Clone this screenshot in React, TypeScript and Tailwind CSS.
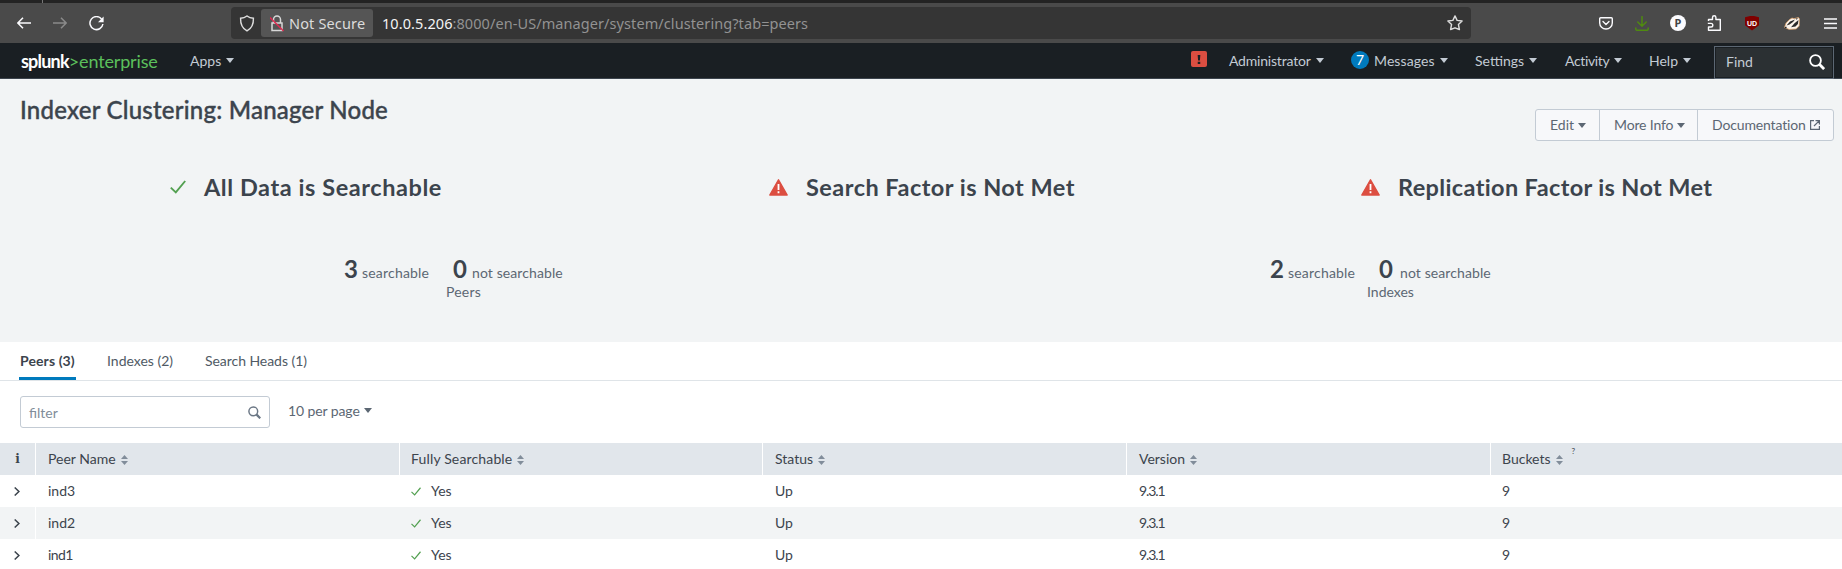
import React from "react";

const Caret = ({ className = "" }: { className?: string }) => (
  <svg viewBox="0 0 8 5" className={"h-[5px] w-2 shrink-0 fill-current " + className}><path d="M0 0h8L4 5z" /></svg>
);

const Sort = () => (
  <svg viewBox="0 0 7 10" className="ml-[5px] mt-px h-[10px] w-[7px] fill-[#818d9a]"><path d="M0 4h7L3.5 0zM0 6h7L3.5 10z" /></svg>
);

const Check = ({ className }: { className: string }) => (
  <svg viewBox="0 0 16 14" className={className} fill="none" stroke="#53a051" strokeWidth="1.9"><path d="M.8 7.6 5.8 12.4 15.2 1" /></svg>
);

const Alert = () => (
  <svg viewBox="0 0 19 17" className="h-[17px] w-[19px] shrink-0">
    <path d="M9.5.8 18.2 16H.8z" fill="#dc4e41" stroke="#dc4e41" strokeWidth="1.4" strokeLinejoin="round" />
    <path d="M8.6 5h1.8v6H8.6zM8.6 12.3h1.8v1.9H8.6z" fill="#fff" />
  </svg>
);

const Magnifier = ({ className }: { className: string }) => (
  <svg viewBox="0 0 16 16" className={className} fill="none" stroke="currentColor"><circle cx="6.5" cy="6.5" r="5.4" strokeWidth="1.8" /><path d="m10.6 10.6 4.5 4.5" strokeWidth="2.8" /></svg>
);

function BrowserBar() {
  return (
    <>
      <div className="flex h-[3px] bg-[#232323]"><div className="ml-[42px] w-px bg-[#777]" /></div>
      <div className="flex h-10 items-center bg-[#4a4a4a] font-['Noto_Sans',sans-serif]">
        <svg viewBox="0 0 14 12" className="ml-[17px] h-3 w-[14px]" fill="none" stroke="#fbfbfe" strokeWidth="1.5"><path d="M14 6H1M6 .7.9 6 6 11.3" /></svg>
        <svg viewBox="0 0 14 12" className="ml-[22px] h-3 w-[14px]" fill="none" stroke="#8a8a8a" strokeWidth="1.5"><path d="M0 6h13M8 .7 13.1 6 8 11.3" /></svg>
        <svg viewBox="0 0 15 15" className="ml-[22px] h-[15px] w-[15px]" fill="none" stroke="#fbfbfe" strokeWidth="1.5"><path d="M12.6 3.1A6.5 6.5 0 1 0 13.9 8" /><path d="M14.600.5v5.700H9z" fill="#fbfbfe" stroke="none" /></svg>
        <div className="ml-[127px] flex h-8 w-[1240px] items-center rounded bg-[#353535]">
          <svg viewBox="0 0 16 18" className="ml-2 h-[17px] w-4" fill="none" stroke="#dedede" strokeWidth="1.5"><path d="M8 1c2 1.500 4 2.200 6.800 2.400C15 9 13.200 14 8 16.900 2.800 14 1 9 1.200 3.400 4 3.200 6 2.500 8 1z" /></svg>
          <div className="ml-[6px] flex h-7 w-28 items-center rounded-[3px] bg-[#555]">
            <svg viewBox="0 0 14 17" className="ml-[9px] h-[17px] w-[14px]" fill="none" stroke="#d8d8d8" strokeWidth="1.5"><path d="M3.500 8V4.500a3.500 3.500 0 0 1 7 0V8M2 8h10v7.500H2z" /><path d="m0 2.500 13.500 13.500" stroke="#e22850" /></svg>
            <span className="ml-[5px] whitespace-nowrap text-[14.5px] leading-5 tracking-[0.15px] text-[#dcdcdc]">Not Secure</span>
          </div>
          <span className="ml-[9px] whitespace-nowrap text-[14.5px] leading-5 tracking-[0.08px] text-[#929292]"><span className="text-[#f4f4f4]">10.0.5.206</span>:8000/en-US/manager/system/clustering?tab=peers</span>
          <svg viewBox="0 0 16 16" className="ml-auto mr-2 h-4 w-4" fill="none" stroke="#dedede" strokeWidth="1.4" strokeLinejoin="round"><path d="m8 .9 2.100 4.500 5 .6-3.700 3.400 1 5.100L8 12.800l-4.400 1.700 1-5.100L.9 6l5-.6z" /></svg>
        </div>
        <div className="ml-[128px] flex items-center">
          <svg viewBox="0 0 14 13" className="h-[13px] w-[14px]" fill="none" stroke="#fbfbfe" strokeWidth="1.4" strokeLinecap="round" strokeLinejoin="round"><path d="M1.700.8h10.600q1 0 1 1V6a6.300 6 0 0 1-12.600 0V1.800q0-1 1-1z" /><path d="m4 4.500 3 3 3-3" /></svg>
          <svg viewBox="0 0 14 15" className="ml-[22px] h-[15px] w-[14px]" fill="none" stroke="#4f8a10" strokeWidth="1.500" strokeLinecap="round"><path d="M7 .6V10M2.800 6 7 10.200 11.200 6M.8 12v1q0 1.300 1.300 1.300h9.800q1.300 0 1.300-1.300v-1" /></svg>
          <div className="ml-[21px] flex h-4 w-4 items-center justify-center rounded-full bg-[#fbfbfe] font-['Noto_Sans',sans-serif] text-[11px] font-bold leading-4 text-[#444]">P</div>
          <svg viewBox="0 0 14 16" className="ml-[21px] h-4 w-[14px]" fill="none" stroke="#fbfbfe" strokeWidth="1.400" strokeLinejoin="round"><path d="M1.500 6V4.500h4V2.500a1.700 1.700 0 0 1 3.400 0v2h4.400v10.700H1.500V12H4a1.700 1.700 0 0 0 0-3.600H.8" /></svg>
          <div className="ml-[24px] flex h-[15px] w-[14px] items-center justify-center bg-[#800000] font-['Liberation_Sans',sans-serif] text-[7px] font-bold leading-none text-white [clip-path:polygon(0_12%,50%_0,100%_12%,100%_65%,50%_100%,0_65%)]">UD</div>
          <svg viewBox="0 0 16 13" className="ml-[25px] h-[13px] w-4">
            <path d="M.4 10.500 2 6l3.500-3.500L8 1l2 .6L14.500.5l1 1.500-.3 7-3 3-7 .4z" fill="#fbf3ea" stroke="#d99b62" strokeWidth=".7" />
            <path d="M2.500 8.500 6 4.500l5-2-2 2.500-3.500 2.500zM7 10.200l3.500-4L14.500 3l-.6 4-2.400 2.500zM.8 9.800h1.800v1.400H.8zM11.500 1.500l2.500-.3-1.500 1.500z" fill="#292929" />
          </svg>
          <svg viewBox="0 0 13 11" className="ml-[24px] h-[11px] w-[13px]" stroke="#fbfbfe" strokeWidth="1.400"><path d="M0 1h13M0 5.500h13M0 10h13" /></svg>
        </div>
      </div>
    </>
  );
}

function MenuItem({ label, className, text }: { label: string; className: string; text: string }) {
  return <div className={"flex items-center whitespace-nowrap " + className}><span className={text}>{label}</span><Caret className="ml-[5px]" /></div>;
}

function SplunkBar() {
  return (
    <div className="flex h-9 items-center border-b border-[#3c444d] bg-[#1a1f23] text-[14px] leading-5 text-[#c3cbd4]">
      <div className="ml-[21px] flex w-[169px] items-center whitespace-nowrap text-[18px]">
        <span className="font-bold tracking-[-0.8px] text-white">splunk</span><span className="tracking-[-0.15px] text-[#5cc05c]">&gt;enterprise</span>
      </div>
      <MenuItem label="Apps" className="w-[1001px]" text="" />
      <div className="-mt-[3px] flex h-4 w-4 items-center justify-center rounded-[2px] bg-[#dc4e41]">
        <svg viewBox="0 0 4 10" className="h-[9px] w-1 fill-[#1a1f23]"><path d="M.5 0h3L3 6H1zM.6 7.500h2.800V10H.6z" /></svg>
      </div>
      <MenuItem label="Administrator" className="ml-[22px] w-[122px]" text="tracking-[-0.2px]" />
      <div className="-mt-0.5 flex h-[18px] w-[18px] items-center justify-center rounded-full bg-[#007abd] text-white">7</div>
      <MenuItem label="Messages" className="ml-[5px] w-[101px]" text="tracking-[0.1px]" />
      <MenuItem label="Settings" className="w-[90px]" text="" />
      <MenuItem label="Activity" className="w-[84px]" text="tracking-[-0.35px]" />
      <MenuItem label="Help" className="w-[65px]" text="" />
      <div className="mt-[3px] flex h-[33px] w-[120px] items-center border border-[#5c6773] bg-[#2b3033] pl-[11px] pr-2 outline-1 -outline-offset-2 outline-[#1a1f23]">
        <span>Find</span><Magnifier className="ml-auto h-4 w-4 text-white" />
      </div>
    </div>
  );
}

function Status({ label, icon, className, text }: { label: string; icon: React.ReactNode; className: string; text: string }) {
  return <div className={"flex items-center whitespace-nowrap " + className}>{icon}<h2 className={"text-[23.5px] font-bold leading-7 " + text}>{label}</h2></div>;
}

function Counts({ searchable, label, className, gap, labelClass }: { searchable: number; label: string; className: string; gap: string; labelClass: string }) {
  return (
    <div className={className}>
      <div className="flex h-7 items-baseline whitespace-nowrap text-[14px]">
        <b className="w-[18px] text-[24px] leading-7 text-[#3c444d]">{searchable}</b><span className="w-[91px] tracking-[0.2px]">searchable</span>
        <b className={"text-[24px] leading-7 text-[#3c444d] " + gap}>0</b><span className="tracking-[0.1px]">not searchable</span>
      </div>
      <div className={"-mt-px text-[14px] leading-5 " + labelClass}>{label}</div>
    </div>
  );
}

const peers = ["ind3", "ind2", "ind1"];
const columns = "grid grid-cols-[36px_364px_363px_364px_364px_1fr]";

export default function App() {
  return (
    <div className="h-[569px] w-[1842px] overflow-hidden bg-white font-['Lato',sans-serif] text-[#5c6773]">
      <BrowserBar />
      <SplunkBar />
      <header className="h-[263px] bg-[#f2f4f5] text-[#3c444d]">
        <div className="flex justify-between pl-5 pr-2">
          <h1 className="mt-[17px] whitespace-nowrap text-[24px] font-medium leading-7 tracking-[0.22px] [-webkit-text-stroke:0.4px_#3c444d]">Indexer Clustering: Manager Node</h1>
          <div className="mt-[30px] flex h-8 items-center divide-x divide-[#c3cbd4] rounded-[3px] border border-[#c3cbd4] bg-[#f7f8fa] text-[14px] leading-5 text-[#5c6773]">
            <div className="flex h-full w-16 items-center pl-[14px]">Edit<Caret className="ml-1" /></div>
            <div className="flex h-full w-[98px] items-center whitespace-nowrap pl-[14px] tracking-[-0.15px]">More Info<Caret className="ml-1" /></div>
            <div className="flex h-full w-[135px] items-center pl-[14px] tracking-[-0.15px]">Documentation
              <svg viewBox="0 0 10 10" className="ml-1 h-[10px] w-[10px]" fill="none" stroke="currentColor" strokeWidth="1.200"><path d="M4 .6H.6v8.800h8.800V6M5.500.6h3.900v3.900M9.400.6 4 6" /></svg>
            </div>
          </div>
        </div>
        <div className="mt-8 flex h-7 items-center">
          <Status className="ml-[170px] w-[599px]" icon={<Check className="mr-[18px] h-[14px] w-4" />} label="All Data is Searchable" text="tracking-[0.57px]" />
          <Status className="w-[592px]" icon={<span className="mr-[18px]"><Alert /></span>} label="Search Factor is Not Met" text="tracking-[0.47px]" />
          <Status className="" icon={<span className="mr-[18px]"><Alert /></span>} label="Replication Factor is Not Met" text="tracking-[0.36px]" />
        </div>
        <div className="mt-[54px] flex text-[#5c6773]">
          <Counts searchable={3} label="Peers" className="ml-[344px] w-[926px]" gap="w-[19px]" labelClass="pl-[102px] tracking-[0.2px]" />
          <Counts searchable={2} label="Indexes" className="" gap="w-[21px]" labelClass="pl-[97px]" />
        </div>
      </header>
      <nav className="flex h-[39px] border-b border-[#dfe4e8] text-[14px] leading-[38px] text-[#505a65]">
        <div className="ml-[19px] w-[57px] whitespace-nowrap border-b-3 border-[#007abd] pl-px font-bold tracking-[0.1px] text-[#3c444d]">Peers (3)</div>
        <div className="ml-[31px] w-[98px]">Indexes (2)</div>
        <div className="tracking-[-0.05px]">Search Heads (1)</div>
      </nav>
      <div className="flex h-[62px] pt-[15px] text-[14px]">
        <div className="ml-5 flex h-8 w-[250px] items-center rounded-[3px] border border-[#c3cbd4] pl-2 pr-2 text-[#818d99]"><span>filter</span><Magnifier className="ml-auto h-[13px] w-[13px] text-[#6b7785]" /></div>
        <div className="ml-[18px] flex h-[28px] items-center tracking-[-0.1px]">10 per page<Caret className="ml-1" /></div>
      </div>
      <div className="text-[14px] leading-8 text-[#3c444d]">
        <div className={columns + " h-8 bg-[#e1e6eb]"}>
          <div className="border-r border-white text-center font-['DejaVu_Serif',serif] text-[12px] font-bold">i</div>
          {["Peer Name", "Fully Searchable", "Status", "Version"].map((c) => <div key={c} className="flex items-center border-r border-white pl-3"><span className={c === "Fully Searchable" ? "-ml-px tracking-[0.15px]" : ""}>{c}</span><Sort /></div>)}
          <div className="flex items-center pl-[11px]">Buckets<Sort /><span className="-mt-4 ml-[9px] text-[8px]">?</span></div>
        </div>
        {peers.map((peer, i) => (
          <div key={peer} className={columns + " h-8 " + (i === 1 ? "bg-[#f2f4f5]" : "bg-white")}>
            <div className="flex items-center border-r border-white pl-[14px]"><svg viewBox="0 0 6 9" className="h-[9px] w-[6px]" fill="none" stroke="#3c444d" strokeWidth="1.500"><path d="m.7.5 4.200 4-4.200 4" /></svg></div>
            <div className={peer === "ind1" ? "pl-3 tracking-[-0.6px]" : "pl-3"}>{peer}</div>
            <div className="flex items-center pl-[11px]"><Check className="mr-[10px] mt-px h-[9px] w-[10px]" />Yes</div>
            <div className="pl-3">Up</div><div className="pl-3 tracking-[-1.1px]">9.3.1</div><div className="pl-[11px]">9</div>
          </div>
        ))}
      </div>
    </div>
  );
}
